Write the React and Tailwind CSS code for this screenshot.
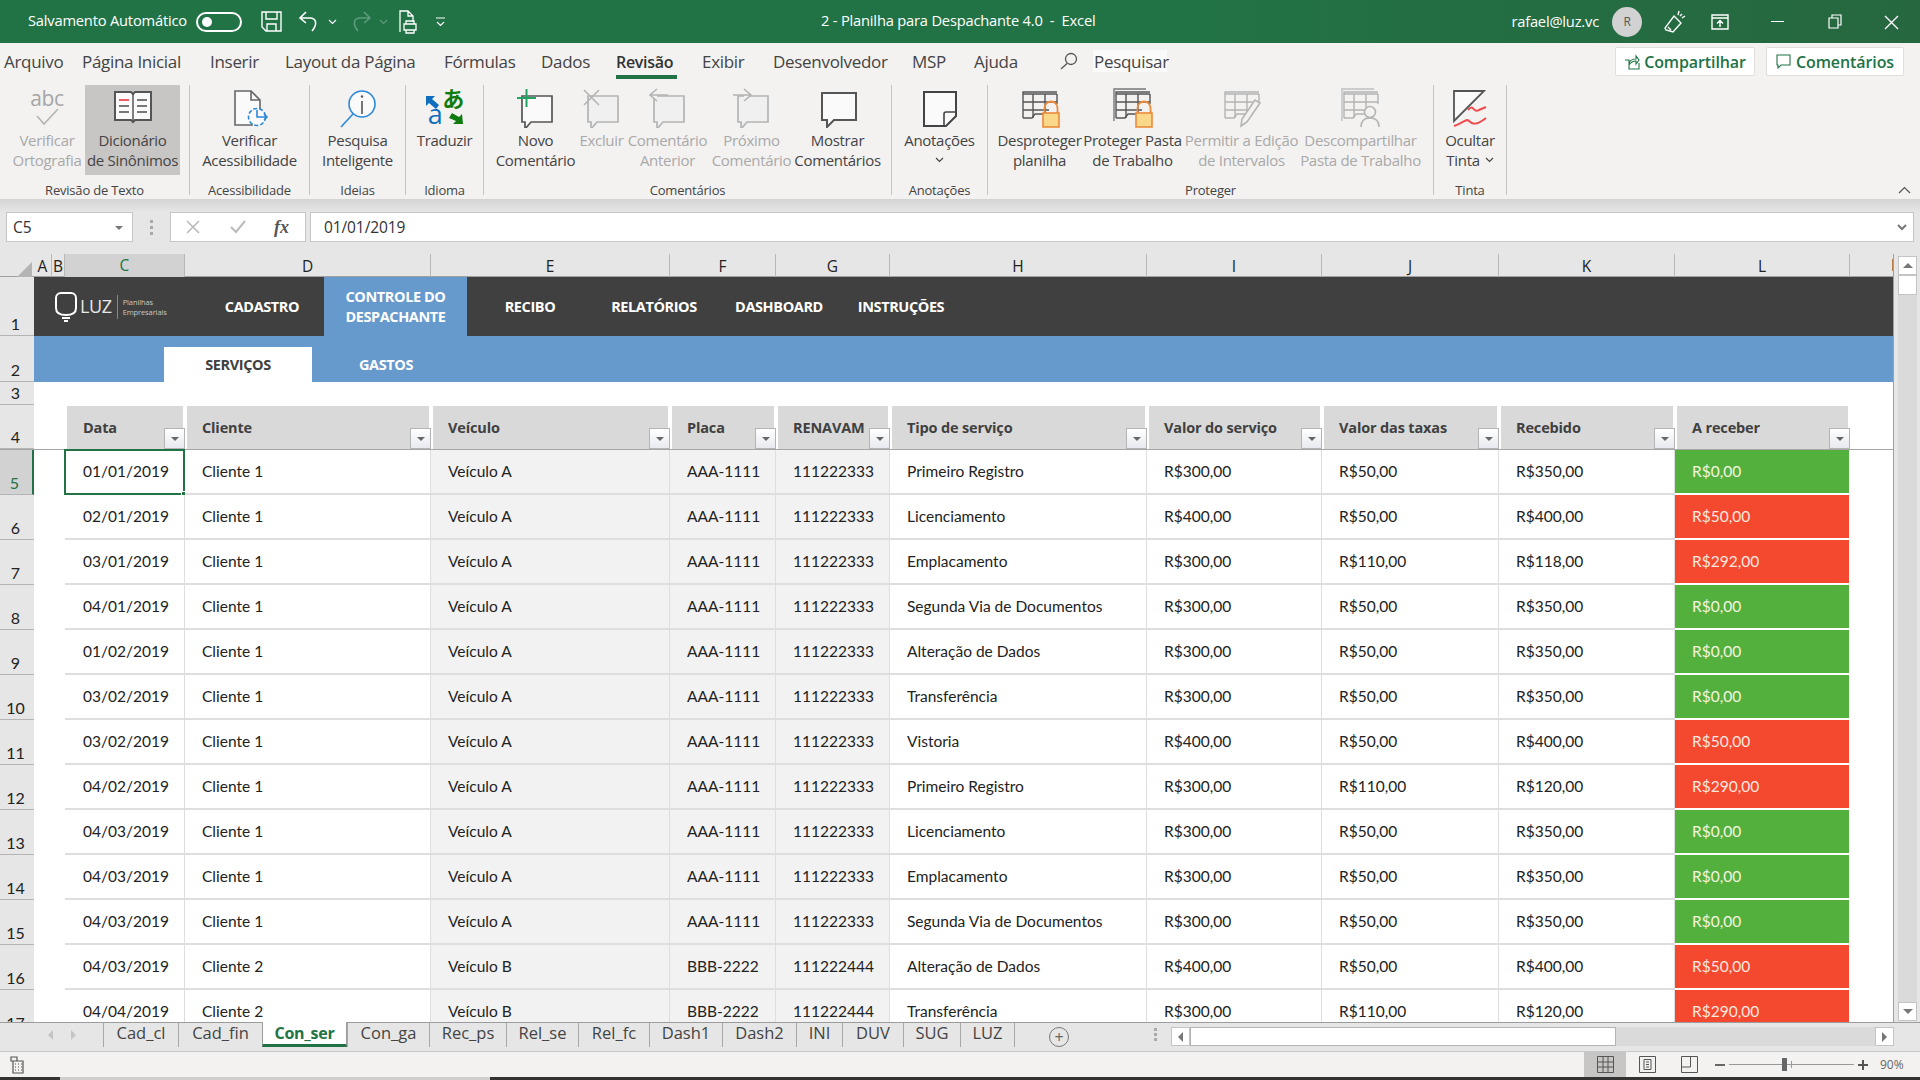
import { Fragment } from "react";

const rows = [
  ["01/01/2019", "Cliente 1", "Veículo A", "AAA-1111", "111222333", "Primeiro Registro", "R$300,00", "R$50,00", "R$350,00", "R$0,00"],
  ["02/01/2019", "Cliente 1", "Veículo A", "AAA-1111", "111222333", "Licenciamento", "R$400,00", "R$50,00", "R$400,00", "R$50,00"],
  ["03/01/2019", "Cliente 1", "Veículo A", "AAA-1111", "111222333", "Emplacamento", "R$300,00", "R$110,00", "R$118,00", "R$292,00"],
  ["04/01/2019", "Cliente 1", "Veículo A", "AAA-1111", "111222333", "Segunda Via de Documentos", "R$300,00", "R$50,00", "R$350,00", "R$0,00"],
  ["01/02/2019", "Cliente 1", "Veículo A", "AAA-1111", "111222333", "Alteração de Dados", "R$300,00", "R$50,00", "R$350,00", "R$0,00"],
  ["03/02/2019", "Cliente 1", "Veículo A", "AAA-1111", "111222333", "Transferência", "R$300,00", "R$50,00", "R$350,00", "R$0,00"],
  ["03/02/2019", "Cliente 1", "Veículo A", "AAA-1111", "111222333", "Vistoria", "R$400,00", "R$50,00", "R$400,00", "R$50,00"],
  ["04/02/2019", "Cliente 1", "Veículo A", "AAA-1111", "111222333", "Primeiro Registro", "R$300,00", "R$110,00", "R$120,00", "R$290,00"],
  ["04/03/2019", "Cliente 1", "Veículo A", "AAA-1111", "111222333", "Licenciamento", "R$300,00", "R$50,00", "R$350,00", "R$0,00"],
  ["04/03/2019", "Cliente 1", "Veículo A", "AAA-1111", "111222333", "Emplacamento", "R$300,00", "R$50,00", "R$350,00", "R$0,00"],
  ["04/03/2019", "Cliente 1", "Veículo A", "AAA-1111", "111222333", "Segunda Via de Documentos", "R$300,00", "R$50,00", "R$350,00", "R$0,00"],
  ["04/03/2019", "Cliente 2", "Veículo B", "BBB-2222", "111222444", "Alteração de Dados", "R$400,00", "R$50,00", "R$400,00", "R$50,00"],
  ["04/04/2019", "Cliente 2", "Veículo B", "BBB-2222", "111222444", "Transferência", "R$300,00", "R$110,00", "R$120,00", "R$290,00"],
];

const headers = ["Data", "Cliente", "Veículo", "Placa", "RENAVAM", "Tipo de serviço", "Valor do serviço", "Valor das taxas", "Recebido", "A receber"];
const gridCols = "grid grid-cols-[34px_18px_13px_120px_246px_239px_106px_114px_257px_175px_177px_176px_175px_44px]";

const Svg = ({ children, w = 40, h = 40 }) => (
  <svg width={w} height={h} viewBox={`0 0 ${w} ${h}`} fill="none">
    {children}
  </svg>
);

const Chevron = ({ color = "#444" }) => (
  <svg width="9" height="6" viewBox="0 0 9 6" fill="none" stroke={color} strokeWidth="1.2">
    <path d="M1 1l3.500 3.500L8 1" />
  </svg>
);

const Bubble = ({ stroke = "#b4b4b4", fill = "#f0f0f0", width = 1.7 }) => (
  <path d="M6 8h30v26H15l-6 7v-7H6z" stroke={stroke} fill={fill} strokeWidth={width} />
);

const IconSpell = () => (
  <svg className="-mt-[6px]" width="40" height="54" viewBox="0 -6 40 54" fill="none">
    <text x="20" y="18" textAnchor="middle" fontSize="21" fill="#a6a6a6" fontFamily="Open Sans">abc</text>
    <path d="M10 28l7 8L31 21" stroke="#b4b4b4" strokeWidth="1.6" />
  </svg>
);

const IconBook = () => (
  <Svg>
    <path d="M2 4h16l2 2 2-2h16v28H22l-2 2-2-2H2z" fill="#fafafa" stroke="#555" strokeWidth="2" />
    <path d="M20 6v27" stroke="#555" strokeWidth="1.5" />
    <path d="M6 12h10" stroke="#ef5b66" strokeWidth="2" />
    <path d="M6 18h10M6 24h10M24 12h10M24 18h10M24 24h10" stroke="#777" strokeWidth="2" />
  </Svg>
);

const IconAccess = () => (
  <Svg>
    <path d="M5 3h16l9 9v14h-8v11H5z" fill="#fafafa" stroke="#666" strokeWidth="1.6" />
    <path d="M21 3v9h9" stroke="#666" strokeWidth="1.6" />
    <circle cx="27" cy="29" r="8.5" fill="#fafafa" stroke="#2b88d8" strokeWidth="1.6" strokeDasharray="4 2" />
    <path d="M27 22v7h10M34 26l3 3-3 3" stroke="#2b88d8" strokeWidth="1.6" />
  </Svg>
);

const IconSmart = () => (
  <Svg>
    <circle cx="24" cy="16" r="13" fill="#fafafa" stroke="#2b88d8" strokeWidth="1.6" />
    <path d="M15 26L3 39" stroke="#2b88d8" strokeWidth="1.6" />
    <path d="M24 13v13" stroke="#555" strokeWidth="1.6" />
    <circle cx="24" cy="8.5" r="1.2" fill="#555" />
  </Svg>
);

const IconTranslate = () => (
  <svg className="-mt-[6px]" width="40" height="54" viewBox="0 -6 40 54" fill="none">
    <path d="M1 8h9l-3 3 7 6-3 4-7-6-3 3z" fill="#106ebe" />
    <text x="28" y="19" textAnchor="middle" fontSize="22" fontWeight="700" fill="#107c10" fontFamily="Noto Sans CJK JP">あ</text>
    <text x="10" y="36" textAnchor="middle" fontSize="27" fill="#106ebe" fontFamily="Open Sans">a</text>
    <path d="M38 36h-10l3-3-7-3 3-5 7 4 3-3z" fill="#107c10" />
  </svg>
);

const IconNewComment = () => (
  <Svg>
    <Bubble stroke="#555" fill="#fafafa" />
    <path d="M1 10h19M10.5 1v18" stroke="#21a366" strokeWidth="2" />
  </Svg>
);

const IconDelComment = () => (
  <Svg>
    <Bubble />
    <path d="M2 2l15 15M17 2L2 17" stroke="#b4b4b4" strokeWidth="1.6" />
  </Svg>
);

const IconPrev = () => (
  <Svg>
    <Bubble />
    <path d="M20 7H2M9 1L2 7l7 6" stroke="#b4b4b4" strokeWidth="1.6" fill="#f3f2f1" />
  </Svg>
);

const IconNext = () => (
  <Svg>
    <Bubble />
    <path d="M1 7h18M12 1l7 6-7 6" stroke="#b4b4b4" strokeWidth="1.6" fill="#f3f2f1" />
  </Svg>
);

const IconShow = () => (
  <Svg>
    <path d="M4 5h34v27H16l-7 7v-7H4z" stroke="#555" fill="#fafafa" strokeWidth="2" />
  </Svg>
);

const IconNote = () => (
  <Svg>
    <path d="M4 4h32v24L26 38H4z" stroke="#444" fill="#fafafa" strokeWidth="2" />
    <path d="M36 24H26a2 2 0 00-2 2v12" stroke="#444" strokeWidth="1.6" />
  </Svg>
);

const Grid = ({ stroke }) => (
  <g stroke={stroke} strokeWidth="1.4">
    <path d="M3 6h34M3 14h34M3 22h26M13 6v24M25 6v20M37 6v10" />
    <path d="M3 30V4h34" />
    <path d="M3 30h9l3-4h10" />
  </g>
);

const Lock = () => (
  <g>
    <path d="M27 25v-5a6.500 6.500 0 0113 0v5" stroke="#ed8b3b" strokeWidth="1.8" transform="translate(-2.500 0)" />
    <rect x="23" y="25" width="16" height="14" fill="#fad889" stroke="#ed8b3b" strokeWidth="1.6" />
  </g>
);

const IconUnprotect = () => (
  <Svg>
    <Grid stroke="#555" />
    <Lock />
  </Svg>
);

const IconProtect = () => (
  <Svg>
    <path d="M1 33V1h32" stroke="#777" strokeWidth="1.4" />
    <Grid stroke="#555" />
    <Lock />
  </Svg>
);

const IconAllow = () => (
  <Svg>
    <Grid stroke="#b4b4b4" />
    <path d="M38 15l-13 19-6 4 1-7 13-19z" fill="#f3f2f1" stroke="#b4b4b4" strokeWidth="1.6" />
  </Svg>
);

const IconUnshare = () => (
  <Svg>
    <path d="M1 33V1h32" stroke="#c0c0c0" strokeWidth="1.4" />
    <Grid stroke="#b4b4b4" />
    <circle cx="29" cy="24" r="5.5" fill="#f3f2f1" stroke="#b4b4b4" strokeWidth="1.6" />
    <path d="M20 39c0-7 4-9 9-9s9 2 9 9" fill="#f3f2f1" stroke="#b4b4b4" strokeWidth="1.6" />
  </Svg>
);

const IconInk = () => (
  <Svg>
    <path d="M4 3h30L4 33z" fill="#fafafa" stroke="#555" strokeWidth="1.8" />
    <path d="M18 22c6-7 5 4 11 0l7-3M4 38c9-3 12-8 15-5s7 5 17-3" stroke="#f04b4b" strokeWidth="2" />
  </Svg>
);

const RibbonBtn = ({ w, lines, off, active, icon, chevron }) => (
  <div className={`${w} h-[90px] flex flex-col items-center pt-[3px] ${active ? "bg-[#c8c6c4]" : ""} ${off ? "text-[#a9a9a9]" : "text-[#444444]"}`}>
    <div className="h-[42px] flex items-start justify-center">{icon}</div>
    {lines.map((l, i) => (
      <div key={i} className="h-5 leading-5 whitespace-nowrap flex items-center gap-[5px]">
        {l}
        {chevron && i === 1 && <Chevron />}
      </div>
    ))}
    {chevron && lines.length === 1 && <div className="h-5 flex items-center"><Chevron /></div>}
  </div>
);

const RibbonGroup = ({ w, label, children }) => (
  <div className={`${w} h-[110px] shrink-0 border-r border-[#c4c4c4] flex flex-col`}>
    <div className="flex justify-center h-[90px]">{children}</div>
    <div className="mt-[6px] text-center text-[13px] leading-[18px] text-[#444444] tracking-[-0.2px]">{label}</div>
  </div>
);

const TitleBar = () => (
  <div className="h-[43px] shrink-0 flex items-center bg-gradient-to-r from-[#217346] from-60% to-[#26673f] text-white relative text-[14.700px] tracking-[-0.2px]">
    <span className="ml-[28px] mb-[2px] w-[168px] whitespace-nowrap">Salvamento Automático</span>
    <div className="w-[46px] h-[20px] rounded-full border-2 border-white flex items-center pl-[4px]">
      <div className="w-[10px] h-[10px] rounded-full bg-white" />
    </div>
    <div className="ml-[19px]">
      <svg width="21" height="21" viewBox="0 0 21 21" fill="none" stroke="#fff" strokeWidth="1.4">
        <path d="M1 1h19v19H5l-4-4zM5 1v7h11V1M6 20v-7h9v7" />
      </svg>
    </div>
    <div className="ml-[16px]">
      <svg width="22" height="22" viewBox="0 0 22 22" fill="none" stroke="#fff" strokeWidth="1.6">
        <path d="M8 1L2 7l6 5M2 7h10c6 0 8 6 2 13" />
      </svg>
    </div>
    <div className="ml-[8px]"><Chevron color="#fff" /></div>
    <div className="ml-[13px]">
      <svg width="22" height="22" viewBox="0 0 22 22" fill="none" stroke="#5f9a7c" strokeWidth="1.6">
        <path d="M14 1l6 6-6 5M20 7H10C4 7 2 13 8 20" />
      </svg>
    </div>
    <div className="ml-[7px]"><Chevron color="#5f9a7c" /></div>
    <div className="ml-[10px]">
      <svg width="20" height="24" viewBox="0 0 20 24" fill="none" stroke="#fff" strokeWidth="1.3">
        <path d="M2 22V1h8l5 5v6M10 1v5h5M6 14h12v6H6zM8 14v-3h8v3M8 20v3h8v-3" />
      </svg>
    </div>
    <svg className="ml-[17px]" width="11" height="10" viewBox="0 0 11 10" fill="none" stroke="#fff" strokeWidth="1.2"><path d="M1 1h9M2 5l3.500 3.500L9 5" /></svg>
    <div className="absolute left-[821px] top-0 h-[41px] flex items-center whitespace-pre">2 - Planilha para Despachante 4.0  -  Excel</div>
    <div className="ml-auto flex items-center">
      <span>rafael@luz.vc</span>
      <div className="ml-[13px] w-[30px] h-[30px] rounded-full bg-[#d2d2d2] text-[#555] text-[12px] flex items-center justify-center">R</div>
      <svg className="ml-[21px]" width="24" height="24" viewBox="0 0 24 24" fill="none" stroke="#fff" strokeWidth="1.4">
        <path d="M11 6l7 7-8 9-7-2-1-2zM8 20l-3-3M15 5l1-4M19 8l3-2M17 6l2-2" />
      </svg>
      <svg className="ml-[24px]" width="18" height="16" viewBox="0 0 18 16" fill="none" stroke="#fff" strokeWidth="1.4">
        <path d="M1 1h16v14H1zM1 4h16M9 13V7M6 9.500L9 6.500l3 3" />
      </svg>
      <div className="w-[57px] ml-[20px] flex justify-center"><div className="w-[13px] h-[1.500px] bg-white" /></div>
      <svg width="57" height="15" viewBox="0 0 57 15" fill="none" stroke="#fff" strokeWidth="1.2">
        <path d="M23 4h9v10h-9zM26 4V1h9v10h-3" />
      </svg>
      <svg width="57" height="16" viewBox="0 0 57 16" fill="none" stroke="#fff" strokeWidth="1.4">
        <path d="M22 2l13 13M35 2L22 15" />
      </svg>
    </div>
  </div>
);

const tabs = [
  ["Arquivo", "w-[78px]"],
  ["Página Inicial", "w-[128px]"],
  ["Inserir", "w-[75px]"],
  ["Layout da Página", "w-[159px]"],
  ["Fórmulas", "w-[97px]"],
  ["Dados", "w-[75px]"],
  ["Revisão", "w-[86px]"],
  ["Exibir", "w-[71px]"],
  ["Desenvolvedor", "w-[139px]"],
  ["MSP", "w-[62px]"],
  ["Ajuda", "w-[86px]"],
];

const TabRow = () => (
  <div className="h-[42px] shrink-0 bg-[#f3f2f1] flex items-start pl-[4px] text-[17px] tracking-[-0.3px] text-[#444444]">
    {tabs.map(([t, w]) => (
      <div key={t} className={`${w} h-[36px] flex items-center whitespace-nowrap ${t === "Revisão" ? "" : "pt-[2px]"}`}>
        <span className={t === "Revisão" ? "h-[36px] leading-[38px] font-semibold border-b-[4px] border-[#217346] w-[61px] text-[#333] text-[16px]" : ""}>{t}</span>
      </div>
    ))}
    <div className="h-[36px] flex items-center">
      <svg width="18" height="18" viewBox="0 0 18 18" fill="none" stroke="#555" strokeWidth="1.3">
        <circle cx="11" cy="7" r="5.500" />
        <path d="M7 11.500L1 17" />
      </svg>
      <span className="ml-[15px] bg-[#fafafa] h-[22px] leading-[24px] px-[1px] w-[74px] whitespace-nowrap overflow-visible">Pesquisar</span>
    </div>
    <div className="ml-auto mr-[16px] mt-[4px] flex gap-[11px] font-semibold text-[#217346] text-[16px] tracking-[-0.1px]">
      <div className="w-[140px] h-[29px] bg-white border border-[#e1dfdd] rounded-[2px] flex items-center justify-center gap-[4px]">
        <svg width="16" height="16" viewBox="0 0 16 16" fill="none" stroke="#217346" strokeWidth="1.1">
          <path d="M1 6h4v9h10V9M5 11c0-4 3-6 7-6V2l3 4-3 4V7c-3 0-5 1-7 4z" />
        </svg>
        Compartilhar
      </div>
      <div className="w-[138px] h-[29px] bg-white border border-[#e1dfdd] rounded-[2px] flex items-center justify-center gap-[5px]">
        <svg width="15" height="15" viewBox="0 0 15 15" fill="none" stroke="#217346" strokeWidth="1.1">
          <path d="M1 1h13v10H5l-3 3v-3H1z" />
        </svg>
        Comentários
      </div>
    </div>
  </div>
);

const Ribbon = () => (
  <div className="h-[114px] shrink-0 bg-[#f3f2f1] flex items-start text-[15px] tracking-[-0.3px] relative">
    <RibbonGroup w="w-[190px]" label="Revisão de Texto">
      <RibbonBtn w="w-[76px]" lines={["Verificar", "Ortografia"]} off icon={<IconSpell />} />
      <RibbonBtn w="w-[95px]" lines={["Dicionário", "de Sinônimos"]} active icon={<IconBook />} />
    </RibbonGroup>
    <RibbonGroup w="w-[120px]" label="Acessibilidade">
      <RibbonBtn w="w-[118px]" lines={["Verificar", "Acessibilidade"]} icon={<IconAccess />} />
    </RibbonGroup>
    <RibbonGroup w="w-[96px]" label="Ideias">
      <RibbonBtn w="w-[94px]" lines={["Pesquisa", "Inteligente"]} icon={<IconSmart />} />
    </RibbonGroup>
    <RibbonGroup w="w-[78px]" label="Idioma">
      <RibbonBtn w="w-[76px]" lines={["Traduzir"]} icon={<IconTranslate />} />
    </RibbonGroup>
    <RibbonGroup w="w-[408px]" label="Comentários">
      <RibbonBtn w="w-[80px]" lines={["Novo", "Comentário"]} icon={<IconNewComment />} />
      <RibbonBtn w="w-[52px]" lines={["Excluir"]} off icon={<IconDelComment />} />
      <RibbonBtn w="w-[80px]" lines={["Comentário", "Anterior"]} off icon={<IconPrev />} />
      <RibbonBtn w="w-[88px]" lines={["Próximo", "Comentário"]} off icon={<IconNext />} />
      <RibbonBtn w="w-[84px]" lines={["Mostrar", "Comentários"]} icon={<IconShow />} />
    </RibbonGroup>
    <RibbonGroup w="w-[96px]" label="Anotações">
      <RibbonBtn w="w-[94px]" lines={["Anotações"]} chevron icon={<IconNote />} />
    </RibbonGroup>
    <RibbonGroup w="w-[446px]" label="Proteger">
      <RibbonBtn w="w-[82px]" lines={["Desproteger", "planilha"]} icon={<IconUnprotect />} />
      <RibbonBtn w="w-[104px]" lines={["Proteger Pasta", "de Trabalho"]} icon={<IconProtect />} />
      <RibbonBtn w="w-[114px]" lines={["Permitir a Edição", "de Intervalos"]} off icon={<IconAllow />} />
      <RibbonBtn w="w-[124px]" lines={["Descompartilhar", "Pasta de Trabalho"]} off icon={<IconUnshare />} />
    </RibbonGroup>
    <RibbonGroup w="w-[73px]" label="Tinta">
      <RibbonBtn w="w-[71px]" lines={["Ocultar", "Tinta"]} chevron icon={<IconInk />} />
    </RibbonGroup>
    <svg className="absolute right-[9px] bottom-[5px]" width="13" height="8" viewBox="0 0 13 8" fill="none" stroke="#555" strokeWidth="1.2">
      <path d="M1 7l5.500-5.500L12 7" />
    </svg>
  </div>
);

const FormulaBar = () => (
  <div className="h-[55px] shrink-0 bg-gradient-to-b from-[#d4d4d4] to-[#e6e6e6] to-[24%] pt-[13px] pl-[6px] pr-[6px] flex items-start text-[15.500px] tracking-[-0.1px] text-[#333]">
    <div className="w-[127px] h-[30px] bg-white border border-[#c6c6c6] flex items-center pl-[6px] pt-[1px] justify-between pr-[9px]">
      C5
      <span className="w-0 h-0 border-x-[4px] border-x-transparent border-t-[4px] border-t-[#777]" />
    </div>
    <div className="w-[37px] h-[30px] flex flex-col items-center justify-center gap-[3px]">
      <span className="w-[3px] h-[3px] bg-[#aaa]" />
      <span className="w-[3px] h-[3px] bg-[#aaa]" />
      <span className="w-[3px] h-[3px] bg-[#aaa]" />
    </div>
    <div className="w-[136px] h-[30px] bg-white border border-[#c6c6c6] flex items-center">
      <svg className="ml-[15px]" width="14" height="14" viewBox="0 0 14 14" fill="none" stroke="#bbb" strokeWidth="1.700"><path d="M1 1l12 12M13 1L1 13" /></svg>
      <svg className="ml-[30px]" width="16" height="14" viewBox="0 0 16 14" fill="none" stroke="#bbb" strokeWidth="2"><path d="M1 7l5 5L15 1" /></svg>
      <span className="ml-[28px] font-['Liberation_Serif',serif] italic font-bold text-[18px] text-[#555]">fx</span>
    </div>
    <div className="ml-[4px] flex-1 h-[30px] bg-white border border-[#c6c6c6] flex items-center pl-[13px] pt-[1px] pr-[6px] justify-between">
      01/01/2019
      <svg width="10" height="7" viewBox="0 0 10 7" fill="none" stroke="#777" strokeWidth="2"><path d="M1 1l4 4 4-4" /></svg>
    </div>
  </div>
);

const colLabels = ["A", "B", "C", "D", "E", "F", "G", "H", "I", "J", "K", "L"];

const ColumnHeader = () => (
  <div className={`${gridCols} h-[23px] shrink-0 bg-[#e6e6e6] text-[15.500px] text-[#222] border-b border-[#a0a0a0]`}>
    <div className="flex items-end justify-end pr-[2px] pb-[1px]">
      <span className="w-0 h-0 border-l-[16px] border-l-transparent border-b-[16px] border-b-[#b4b4b4]" />
    </div>
    {colLabels.map((c) => (
      <div key={c} className={`flex items-center justify-center border-r border-[#b8b8b8] ${c === "C" ? "bg-[#d2d2d2] text-[#217346] border-b-2 border-b-[#217346]" : ""}`}>
        {c}
      </div>
    ))}
    <div className="overflow-hidden"><div className="w-[96px] text-center">M</div></div>
  </div>
);

const RowNum = ({ n, selected }) => (
  <div className={`flex items-end justify-center pr-[3px] pb-[1px] text-[16px] leading-[20px] border-b border-[#b4b4b4] ${selected ? "bg-[#d2d2d2] text-[#217346] border-r-2 border-r-[#217346]" : "bg-[#e6e6e6] text-[#222]"}`}>
    {n}
  </div>
);

const FilterBtn = () => (
  <div className="absolute right-0 bottom-0 w-[21px] h-[21px] bg-gradient-to-b from-white to-[#e8eaf0] border border-[#b4b4b4] flex items-center justify-center">
    <span className="w-0 h-0 border-x-[4px] border-x-transparent border-t-[4px] border-t-[#666]" />
  </div>
);

const LuzLogo = () => (
  <div className="flex items-center text-white">
    <svg width="22" height="31" viewBox="0 0 22 31" fill="none" stroke="#fff" strokeWidth="2">
      <path d="M6 2h10a5 5 0 015 5v10c0 5-4 7-10 7S1 22 1 17V7a5 5 0 015-5z" />
      <path d="M7 27h8M9 30h4" />
    </svg>
    <span className="ml-[3px] text-[18px] font-normal tracking-[-0.4px] text-[#e8e8e8]">LUZ</span>
    <span className="ml-[5px] w-px h-[24px] bg-[#888]" />
    <div className="ml-[5px] text-[7.500px] font-normal leading-[10px] tracking-[-0.1px] text-[#c8c8c8]">
      <div>Planilhas</div>
      <div>Empresariais</div>
    </div>
  </div>
);

const navItems = [
  ["CADASTRO", "w-[124px]"],
  ["RECIBO", "w-[126px]"],
  ["RELATÓRIOS", "w-[122px]"],
  ["DASHBOARD", "w-[128px]"],
  ["INSTRUÇÕES", "w-[116px]"],
];

const Banner = () => (
  <>
    <div className={`${gridCols} h-[59px]`}>
      <RowNum n={1} />
      <div className="col-span-13 bg-[#404040] flex items-stretch text-white font-bold text-[14.500px] tracking-[-0.4px] font-['Open_Sans',sans-serif]">
        <div className="w-[166px] pl-[21px] flex items-center"><LuzLogo /></div>
        <div className={`${navItems[0][1]} flex items-center justify-center pt-[1px]`}>{navItems[0][0]}</div>
        <div className="w-[143px] bg-[#6699cc] flex items-center justify-center text-center leading-[20px] pt-[1px]">CONTROLE DO<br />DESPACHANTE</div>
        {navItems.slice(1).map(([t, w]) => (
          <div key={t} className={`${w} flex items-center justify-center pt-[1px]`}>{t}</div>
        ))}
      </div>
    </div>
    <div className={`${gridCols} h-[46px]`}>
      <RowNum n={2} />
      <div className="col-span-13 bg-[#6699cc] flex items-end pl-[130px] font-bold text-[14.500px] tracking-[-0.4px] font-['Open_Sans',sans-serif]">
        <div className="w-[148px] h-[35px] pt-[1px] bg-white text-[#404040] flex items-center justify-center">SERVIÇOS</div>
        <div className="w-[148px] h-[35px] pt-[1px] text-white flex items-center justify-center">GASTOS</div>
      </div>
    </div>
    <div className={`${gridCols} h-[23px]`}>
      <RowNum n={3} />
      <div className="col-span-13 bg-white" />
    </div>
  </>
);

const TableHeader = () => (
  <div className={`${gridCols} h-[45px] border-b-2 border-[#a6a6a6]`}>
    <RowNum n={4} />
    <div className="col-span-2 bg-white" />
    {headers.map((h, i) => (
      <div key={h} className="relative pt-[1px] bg-white">
        <div className={`h-[43px] mx-[2px] bg-[#d9d9d9] flex items-center ${i === 0 ? "pl-[16px]" : "pl-[15px]"} font-['Open_Sans',sans-serif] font-bold text-[14.500px] text-[#404040] tracking-[-0.15px]`}>{h}</div>
        <FilterBtn />
      </div>
    ))}
    <div className="bg-white" />
  </div>
);

const DataRow = ({ n, cells }) => {
  const selected = n === 5;
  return (
    <div className={`${gridCols} h-[45px]`}>
      <RowNum n={n} selected={selected} />
      <div className="col-span-2 bg-white" />
      {cells.map((c, i) => {
        const isReceber = i === 9;
        const bg = isReceber
          ? c === "R$0,00"
            ? "bg-[#54b03c] text-[#f5f5e0]"
            : "bg-[#f4492e] text-[#fde8e0]"
          : i >= 2 && i <= 4
            ? "bg-[#f2f2f2] text-[#222]"
            : "bg-white text-[#222]";
        return (
          <div key={i} className={`relative flex items-center pt-[1px] ${i === 0 ? "pl-[18px]" : "pl-[17px]"} border-b-2 border-r ${isReceber ? "border-white" : "border-[#dedede]"} ${bg}`}>
            <span className="whitespace-nowrap">{c}</span>
            {selected && i === 0 && (
              <div className="absolute -left-[1px] -top-[1px] -right-[1px] -bottom-[2px] border-2 border-[#217346]">
                <span className="absolute -right-[3px] -bottom-[3px] w-[5px] h-[5px] bg-[#217346] border border-white" />
              </div>
            )}
          </div>
        );
      })}
      <div className="bg-white" />
    </div>
  );
};

const VScrollbar = () => (
  <div className="w-[26px] shrink-0 bg-[#e6e6e6] pl-[4px] pr-[3px] pt-[2px] pb-[1px] flex flex-col">
    <div className="h-[19px] bg-white border border-[#c4c4c4] flex items-center justify-center">
      <span className="w-0 h-0 border-x-[5px] border-x-transparent border-b-[5px] border-b-[#777]" />
    </div>
    <div className="flex-1 bg-[#dadada] flex flex-col">
      <div className="h-[20px] bg-white border border-[#c4c4c4]" />
      <div className="mt-auto h-[19px] bg-white border border-[#c4c4c4] flex items-center justify-center">
        <span className="w-0 h-0 border-x-[5px] border-x-transparent border-t-[5px] border-t-[#777]" />
      </div>
    </div>
  </div>
);

const sheets = [
  ["Cad_cl", "w-[75px]"],
  ["Cad_fin", "w-[84px]"],
  ["Con_ser", "w-[85px]"],
  ["Con_ga", "w-[82px]"],
  ["Rec_ps", "w-[77px]"],
  ["Rel_se", "w-[72px]"],
  ["Rel_fc", "w-[71px]"],
  ["Dash1", "w-[73px]"],
  ["Dash2", "w-[74px]"],
  ["INI", "w-[46px]"],
  ["DUV", "w-[61px]"],
  ["SUG", "w-[57px]"],
  ["LUZ", "w-[54px]"],
];

const SheetTabs = () => (
  <div className="h-[29px] shrink-0 bg-[#e6e6e6] border-t border-[#9c9c9c] flex items-start text-[16.500px] text-[#444]">
    <div className="w-[103px] h-[24px] flex items-center justify-center gap-[18px] pl-[20px]">
      <span className="w-0 h-0 border-y-[5px] border-y-transparent border-r-[5px] border-r-[#c4c4c4]" />
      <span className="w-0 h-0 border-y-[5px] border-y-transparent border-l-[5px] border-l-[#c4c4c4]" />
    </div>
    {sheets.map(([s, w]) => (
      <Fragment key={s}>
        {s === "Con_ser" ? (
          <div className={`${w} h-[25px] bg-white border-x border-[#9c9c9c] border-b-[3px] border-b-[#217346] text-[#217346] font-bold text-[16px] tracking-[-0.3px] flex items-center justify-center -mt-px`}>{s}</div>
        ) : (
          <div className={`${w} h-[24px] pb-[3px] flex items-center justify-center border-l border-[#a8a8a8]`}>{s}</div>
        )}
      </Fragment>
    ))}
    <div className="h-[24px] border-l border-[#a8a8a8]" />
    <div className="ml-[34px] mt-[4px] w-[20px] h-[20px] rounded-full border border-[#777] flex items-center justify-center text-[16px] leading-none text-[#666]">+</div>
    <div className="ml-[85px] mt-[5px] flex flex-col gap-[2px]">
      <span className="w-[3px] h-[3px] bg-[#aaa]" />
      <span className="w-[3px] h-[3px] bg-[#aaa]" />
      <span className="w-[3px] h-[3px] bg-[#aaa]" />
    </div>
    <div className="ml-[14px] mt-[4px] flex w-[723px] h-[19px] bg-[#dadada]">
      <div className="w-[19px] bg-white border border-[#c4c4c4] flex items-center justify-center">
        <span className="w-0 h-0 border-y-[5px] border-y-transparent border-r-[5px] border-r-[#777]" />
      </div>
      <div className="w-[426px] bg-white border border-[#b4b4b4]" />
      <div className="ml-auto w-[19px] bg-white border border-[#c4c4c4] flex items-center justify-center">
        <span className="w-0 h-0 border-y-[5px] border-y-transparent border-l-[5px] border-l-[#777]" />
      </div>
    </div>
  </div>
);

const StatusBar = () => (
  <div className="h-[26px] shrink-0 bg-[#f3f2f1] border-t border-[#c8c8c8] flex items-stretch text-[12px] text-[#666]">
    <div className="ml-[10px] flex items-center">
      <svg width="14" height="18" viewBox="0 0 14 18" fill="none" stroke="#555" strokeWidth="1.2">
        <path d="M1 1h6v4H1zM3 5h10v12H3z" />
        <path d="M5 8h1M8 8h1M11 8h1M5 11h1M8 11h1M11 11h1M5 14h1M8 14h1M11 14h1" />
      </svg>
    </div>
    <div className="ml-[1560px] w-[42px] bg-[#c8c6c4] flex items-center justify-center">
      <svg width="17" height="17" viewBox="0 0 17 17" fill="none" stroke="#555"><path d="M.5.500h16v16H.5zM.5 6h16M.5 11h16M6 .5v16M11 .5v16" /></svg>
    </div>
    <div className="w-[42px] flex items-center justify-center">
      <svg width="17" height="17" viewBox="0 0 17 17" fill="none" stroke="#555"><path d="M.5.500h16v16H.5zM5 3.500h7v10H5zM7 6h3M7 8.500h3M7 11h3" /></svg>
    </div>
    <div className="w-[42px] flex items-center justify-center">
      <svg width="17" height="17" viewBox="0 0 17 17" fill="none" stroke="#555"><path d="M.5.500h16v16H.5zM.5 11h9V.5" /></svg>
    </div>
    <div className="ml-[5px] flex items-center">
      <span className="w-[10px] h-[2px] bg-[#666]" />
      <div className="ml-[4px] w-[125px] h-px bg-[#999] relative">
        <span className="absolute left-[53px] -top-[6px] w-[5px] h-[13px] bg-[#666]" />
        <span className="absolute left-[62px] -top-[3px] w-px h-[7px] bg-[#999]" />
      </div>
      <svg className="ml-[4px]" width="10" height="10" viewBox="0 0 10 10" stroke="#555" strokeWidth="2"><path d="M0 5h10M5 0v10" /></svg>
      <span className="ml-[12px]">90%</span>
    </div>
  </div>
);

export default function App() {
  return (
    <div className="w-[1920px] h-[1080px] overflow-hidden flex flex-col bg-white font-['Open_Sans',sans-serif]">
      <TitleBar />
      <TabRow />
      <Ribbon />
      <FormulaBar />
      <div className="flex-1 min-h-0 flex overflow-hidden">
        <div className="w-[1894px] shrink-0 overflow-hidden border-r border-[#a0a0a0] flex flex-col">
          <ColumnHeader />
          <div className="flex-1 min-h-0 overflow-hidden font-['Lato',sans-serif] text-[15.500px]">
            <Banner />
            <TableHeader />
            {rows.map((cells, i) => (
              <DataRow key={i} n={i + 5} cells={cells} />
            ))}
          </div>
        </div>
        <VScrollbar />
      </div>
      <SheetTabs />
      <StatusBar />
      <div className="h-[3px] shrink-0 flex bg-[#333]">
        <div className="ml-[60px] w-[430px] bg-[#cfcfcf]" />
      </div>
    </div>
  );
}
